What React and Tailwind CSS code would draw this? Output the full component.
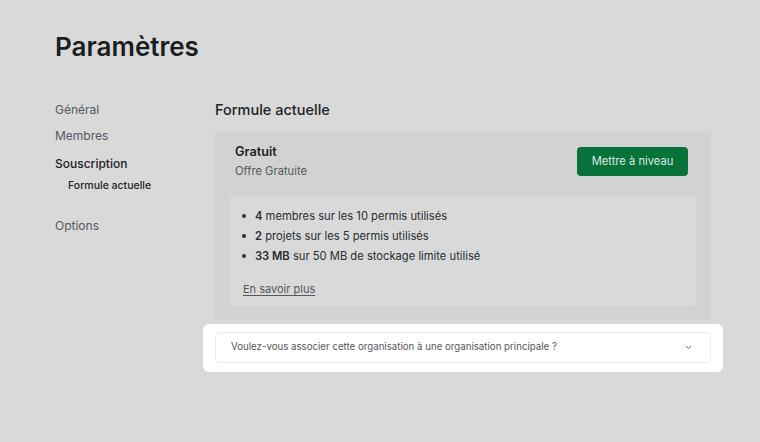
import React from "react";

function ChevronDown() {
  return (
    <svg width="9" height="9" viewBox="0 0 24 24" fill="none" stroke="#55585c" strokeWidth="2.6" strokeLinecap="round" strokeLinejoin="round">
      <path d="M6 9l6 6 6-6" />
    </svg>
  );
}

function Bullet({ bold, rest }) {
  return (
    <li className="flex items-center h-[20px]">
      <span className="w-[4px] h-[4px] rounded-full bg-[#2a2d31] ml-[12px] mr-[9px]" />
      <span>
        <span className="font-semibold">{bold}</span> {rest}
      </span>
    </li>
  );
}

export default function App() {
  return (
    <div
      className="w-[760px] h-[442px] bg-[#d9d9d9] overflow-hidden text-[#1f2226]"
      style={{ fontFamily: "Inter, 'Noto Sans', sans-serif" }}
    >
      <div className="pl-[55px] pt-[29px]">
        <h1 className="text-[26px] leading-[36px] font-semibold text-[#1a1d21]">Paramètres</h1>
        <div className="flex mt-[34px]">
          <nav className="w-[160px] flex flex-col text-[12px] leading-[20px] pt-[1px]">
            <span className="text-[#55585c]">Général</span>
            <span className="text-[#55585c] mt-[6px]">Membres</span>
            <span className="text-[#1f2226] font-medium mt-[8px]">Souscription</span>
            <span className="text-[10.5px] leading-[16px] font-medium text-[#1f2226] pl-[13px] mt-[4px]">Formule actuelle</span>
            <span className="text-[#55585c] mt-[22px]">Options</span>
          </nav>
          <main className="w-[496px] flex flex-col">
            <h2 className="text-[14.5px] leading-[22px] font-medium text-[#1f2226]">Formule actuelle</h2>
            <div className="mt-[10px] bg-[#d2d2d2] pt-[12px] pb-[14px] px-[15px]">
              <div className="flex items-center justify-between pl-[5px] pr-[8px]">
                <div className="flex flex-col">
                  <span className="text-[12.7px] leading-[18px] font-semibold text-[#1f2226]">Gratuit</span>
                  <span className="text-[11.2px] leading-[16px] mt-[2px] text-[#55585c]">Offre Gratuite</span>
                </div>
                <button className="h-[29px] w-[111px] rounded-[4px] bg-[#07733a] text-[11.2px] text-[#dde8e1]">
                  Mettre à niveau
                </button>
              </div>
              <div className="mt-[16px] bg-[#d9d9d9] rounded-[4px] pt-[11px] pb-[9px]">
                <ul className="text-[11.2px] text-[#2a2d31]">
                  <Bullet bold="4" rest="membres sur les 10 permis utilisés" />
                  <Bullet bold="2" rest="projets sur les 5 permis utilisés" />
                  <Bullet bold="33 MB" rest="sur 50 MB de stockage limite utilisé" />
                </ul>
                <a className="block mt-[15px] ml-[13px] text-[11px] leading-[16px] text-[#55585c] underline underline-offset-2">
                  En savoir plus
                </a>
              </div>
            </div>
            <div className="-mx-[12px] mt-[4px] bg-white rounded-[6px] px-[12px] pt-[8px] pb-[9px]">
              <div className="border border-[#ececec] rounded-[4px] h-[31px] flex items-center justify-between pl-[15px] pr-[17px]">
                <span className="text-[9.7px] text-[#55585c]">Voulez-vous associer cette organisation à une organisation principale ?</span>
                <ChevronDown />
              </div>
            </div>
          </main>
        </div>
      </div>
    </div>
  );
}
